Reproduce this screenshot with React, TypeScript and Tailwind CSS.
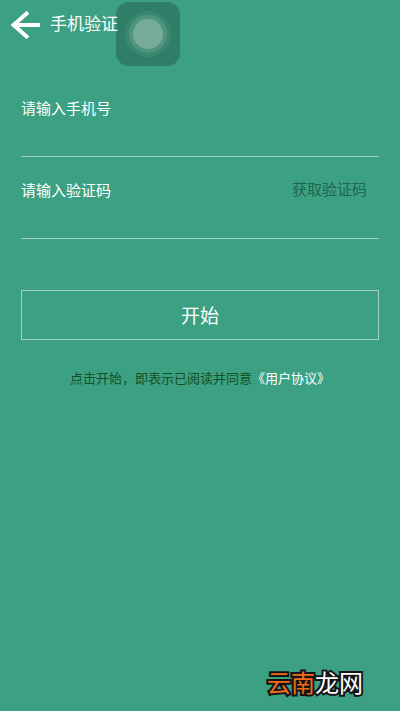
import { useState } from "react";

const FONT = "font-['Noto_Sans_CJK_SC','Noto_Sans',sans-serif]";

function BackArrow() {
  return (
    <svg viewBox="0 0 30 30" className="h-[30px] w-[30px]" fill="none" stroke="currentColor" strokeWidth="4">
      <path d="M18 2.2 3.6 15 18 27.8" strokeLinejoin="miter" />
      <path d="M4 15h26" />
    </svg>
  );
}

function Header() {
  return (
    <header className="relative z-10 flex h-12 items-start gap-[10px] pt-[10px] pl-[10px]">
      <button type="button" aria-label="返回">
        <BackArrow />
      </button>
      <h1 className="text-[17px] leading-[26px]">手机验证</h1>
    </header>
  );
}

// Floating assistive button, its left edge runs under the title
function AssistiveTouch() {
  return (
    <button
      type="button"
      aria-label="辅助触控"
      className="absolute top-[2px] left-[116px] flex h-16 w-16 items-center justify-center rounded-[13px] bg-[#2f7e67]"
    >
      <span className="flex h-[46px] w-[46px] items-center justify-center rounded-full bg-[#3c876f]">
        <span className="flex h-[38px] w-[38px] items-center justify-center rounded-full bg-[#50957f]">
          <span className="h-[30px] w-[30px] rounded-full bg-[#77ac9b]" />
        </span>
      </span>
    </button>
  );
}

export default function App() {
  const [phone, setPhone] = useState("");
  const [code, setCode] = useState("");

  return (
    <div className={`relative flex min-h-screen flex-col bg-[#3ba182] text-white ${FONT}`}>
      <Header />
      <AssistiveTouch />

      <form className="px-[21px] pt-9" onSubmit={(e) => e.preventDefault()}>
        <div className="flex h-[73px] items-start border-b border-[#a3d1c2] pt-[11px]">
          <input
            type="tel"
            aria-label="请输入手机号"
            placeholder="请输入手机号"
            value={phone}
            onChange={(e) => setPhone(e.target.value)}
            className="h-6 w-full min-w-0 bg-transparent text-[15px] outline-none placeholder:text-white"
          />
        </div>

        <div className="mt-[9px] flex h-[73px] items-start border-b border-[#a3d1c2] pt-[11px]">
          <input
            type="text"
            inputMode="numeric"
            aria-label="请输入验证码"
            placeholder="请输入验证码"
            value={code}
            onChange={(e) => setCode(e.target.value)}
            className="h-6 min-w-0 flex-1 bg-transparent text-[15px] outline-none placeholder:text-white"
          />
          <button type="button" className="shrink-0 pr-3 text-[15px] leading-6 text-[#1f6650]">
            获取验证码
          </button>
        </div>

        <button type="submit" className="mt-[51px] h-[50px] w-full border border-[#a3d1c2] text-[19px]">
          开始
        </button>

        <p className="mt-7 text-center text-[13px] leading-5 text-[#154f22]">
          点击开始，即表示已阅读并同意
          <a href="#agreement" className="text-white">
            《用户协议》
          </a>
        </p>
      </form>

      <footer className="mt-auto flex justify-end pr-[37px] pb-[11px] text-2xl leading-9">
        <span className="[-webkit-text-stroke:4px_#141414] [paint-order:stroke_fill]">
          <span className="text-[#f26a1b]">云南</span>龙网
        </span>
      </footer>
    </div>
  );
}
